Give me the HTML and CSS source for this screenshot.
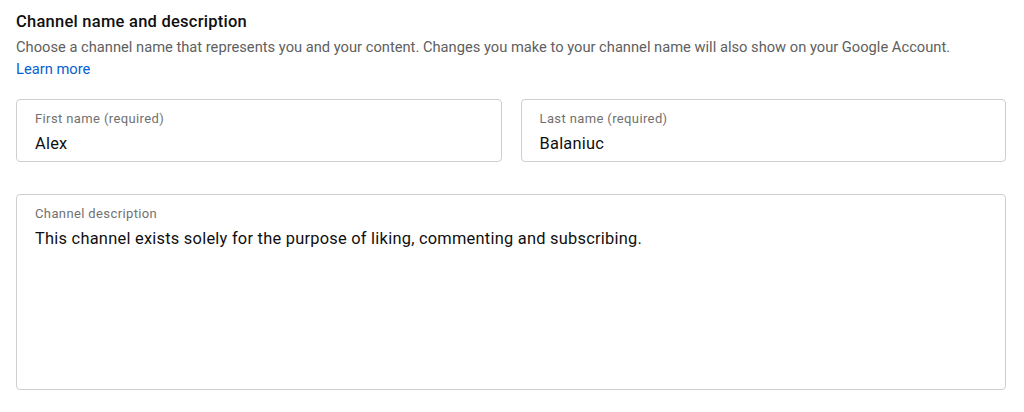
FILE: index.html
```html
<!DOCTYPE html>
<html>
<head>
    <title>Channel name and description</title>
    <link rel="stylesheet" href="styles.css">
</head>
<body>
    <div class="section">
        <h2 class="section-title">Channel name and description</h2>
        <p class="section-info">Choose a channel name that represents you and your content. Changes you make to your channel name will also show on your Google Account.<br><a href="#" class="link">Learn more</a></p>

        <div class="name-row">
            <div class="field">
                <label class="field-label" for="firstName">First name (required)</label>
                <input type="text" id="firstName" class="field-input" value="Alex">
            </div>
            <div class="field">
                <label class="field-label" for="lastName">Last name (required)</label>
                <input type="text" id="lastName" class="field-input" value="Balaniuc">
            </div>
        </div>

        <div class="field field-area">
            <label class="field-label" for="description">Channel description</label>
            <textarea id="description" class="field-input field-textarea">This channel exists solely for the purpose of liking, commenting and subscribing.</textarea>
        </div>
    </div>
</body>
</html>
```

FILE: styles.css
```css
body {
    margin: 0;
    font-family: Roboto, "Noto Sans", Arial, sans-serif;
    color: #0f0f0f;
    background-color: #fff;
}
.section {
    width: 990px;
    padding: 10px 0 0 16px;
}
.section-title {
    margin: 0;
    font-size: 16.5px;
    font-weight: 500;
    line-height: 24px;
    letter-spacing: 0.25px;
}
.section-info {
    margin: 2px 0 19px;
    font-size: 14.7px;
    line-height: 22px;
    color: #606060;
}
.link {
    color: #065fd4;
    text-decoration: none;
}
.name-row {
    display: grid;
    grid-template-columns: 1fr 1fr;
    gap: 19px;
}
.field {
    display: flex;
    flex-direction: column;
    padding: 11px 18px 5px;
    border: 1px solid #cfcfcf;
    border-radius: 4px;
}
.field-label {
    font-size: 13px;
    line-height: 16px;
    letter-spacing: 0.38px;
    color: #717171;
    margin-bottom: 5px;
}
.field-input {
    border: none;
    outline: none;
    padding: 0;
    margin: 0;
    font-family: inherit;
    font-size: 16.4px;
    line-height: 24px;
    letter-spacing: 0.25px;
    height: 24px;
    color: #0f0f0f;
    background: transparent;
}
.field-area {
    margin-top: 32px;
    height: 178px;
}
.field-textarea {
    height: 157px;
    resize: none;
}
```
